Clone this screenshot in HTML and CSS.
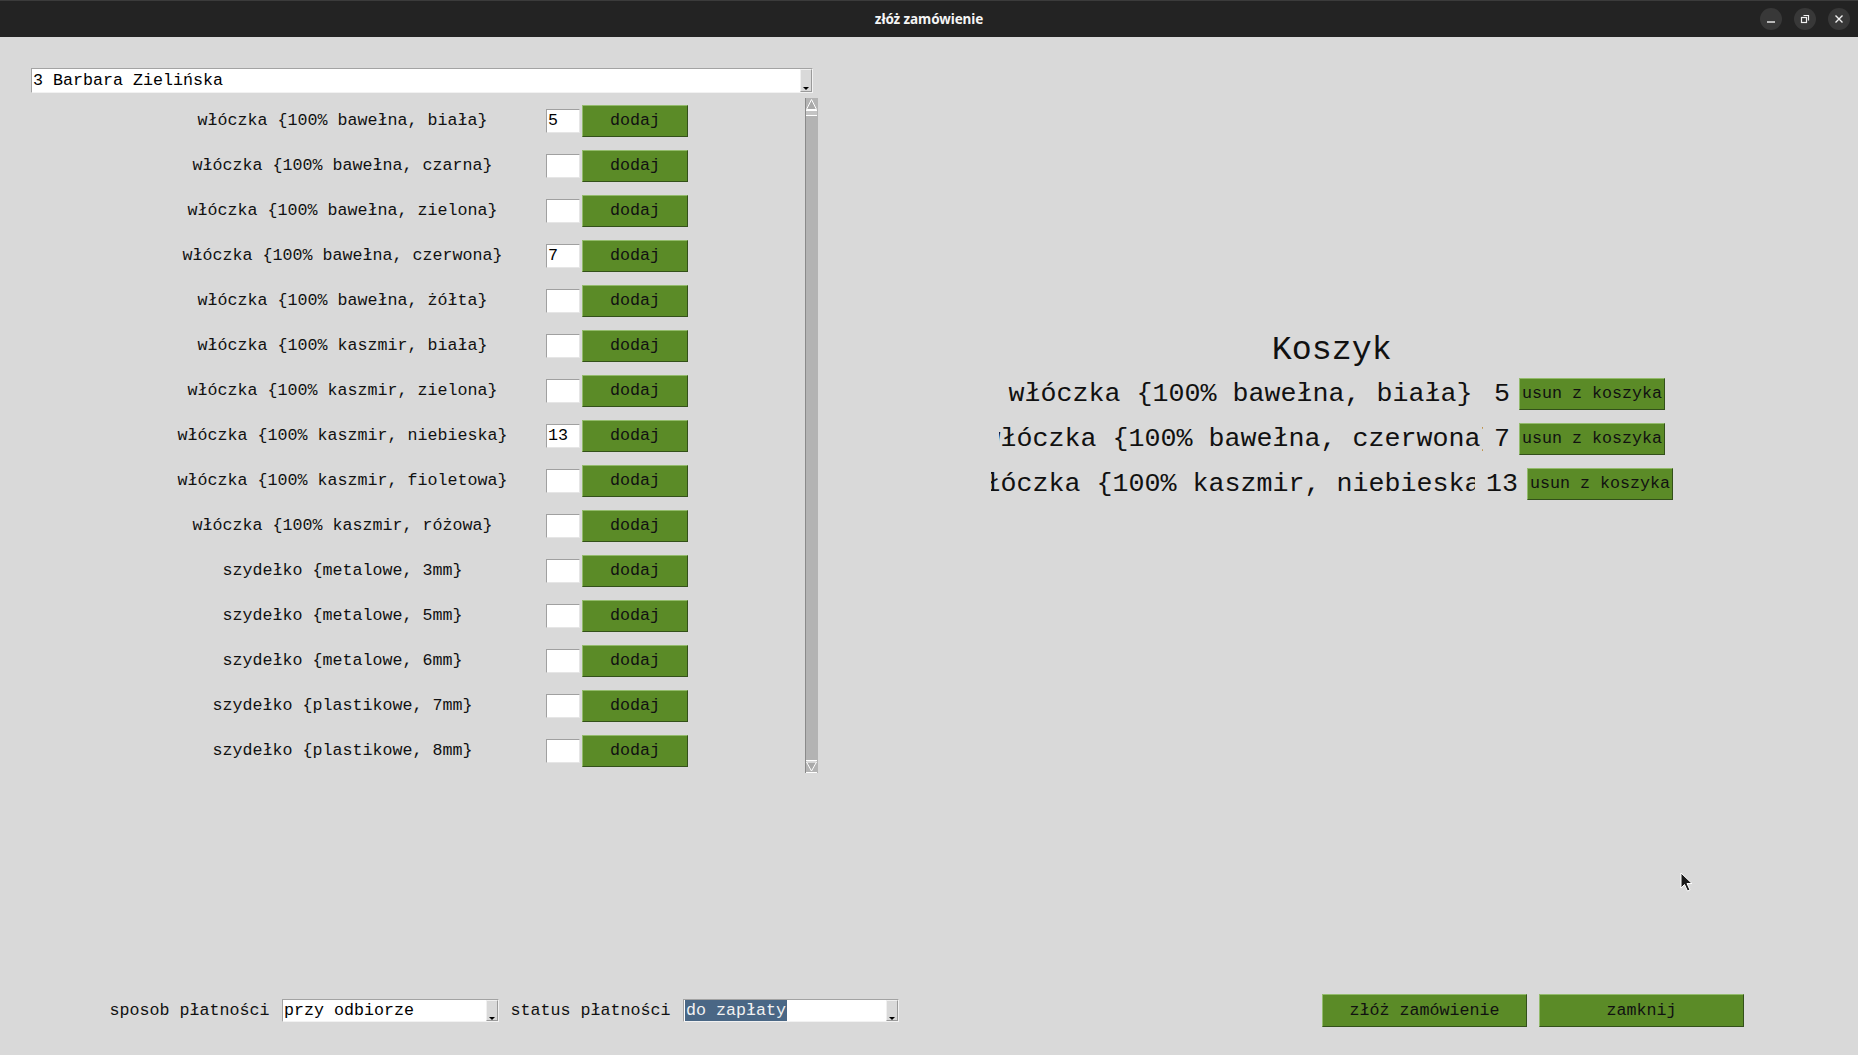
FILE: index.html
```html
<!DOCTYPE html>
<html lang="pl">
<head>
<meta charset="utf-8">
<title>złóż zamówienie</title>
<link rel="stylesheet" href="styles.css">
</head>
<body>
<div class="titlebar">
  <div></div>
  <div class="title">złóż zamówienie</div>
  <div class="controls">
    <span class="ctl"><svg width="22" height="22" viewBox="0 0 22 22"><line x1="7" y1="14" x2="15" y2="14" stroke="#f0f0f0" stroke-width="1.4"/></svg></span>
    <span class="ctl"><svg width="22" height="22" viewBox="0 0 22 22"><rect x="7.5" y="9.5" width="5" height="5" fill="none" stroke="#f0f0f0" stroke-width="1.2"/><path d="M9.5 7.5 H14.5 V12.5" fill="none" stroke="#f0f0f0" stroke-width="1.2"/></svg></span>
    <span class="ctl"><svg width="22" height="22" viewBox="0 0 22 22"><path d="M7.5 7.5 L14.5 14.5 M14.5 7.5 L7.5 14.5" stroke="#f0f0f0" stroke-width="1.4"/></svg></span>
  </div>
</div>

<div class="window">
  <div class="top">
    <div class="left">
      <div class="combo combo-main">
        <span class="combo-text">3 Barbara Zielińska</span>
        <span class="combo-arrow"><svg width="10" height="21" viewBox="0 0 10 21"><polygon points="2,17 8,17 5,20" fill="#000"/></svg></span>
      </div>
      <div class="list">
        <div class="rows">
          <div class="row"><span class="name">włóczka {100% bawełna, biała}</span><span class="qty">5</span><span class="btn add">dodaj</span></div>
          <div class="row"><span class="name">włóczka {100% bawełna, czarna}</span><span class="qty"></span><span class="btn add">dodaj</span></div>
          <div class="row"><span class="name">włóczka {100% bawełna, zielona}</span><span class="qty"></span><span class="btn add">dodaj</span></div>
          <div class="row"><span class="name">włóczka {100% bawełna, czerwona}</span><span class="qty">7</span><span class="btn add">dodaj</span></div>
          <div class="row"><span class="name">włóczka {100% bawełna, żółta}</span><span class="qty"></span><span class="btn add">dodaj</span></div>
          <div class="row"><span class="name">włóczka {100% kaszmir, biała}</span><span class="qty"></span><span class="btn add">dodaj</span></div>
          <div class="row"><span class="name">włóczka {100% kaszmir, zielona}</span><span class="qty"></span><span class="btn add">dodaj</span></div>
          <div class="row"><span class="name">włóczka {100% kaszmir, niebieska}</span><span class="qty">13</span><span class="btn add">dodaj</span></div>
          <div class="row"><span class="name">włóczka {100% kaszmir, fioletowa}</span><span class="qty"></span><span class="btn add">dodaj</span></div>
          <div class="row"><span class="name">włóczka {100% kaszmir, różowa}</span><span class="qty"></span><span class="btn add">dodaj</span></div>
          <div class="row"><span class="name">szydełko {metalowe, 3mm}</span><span class="qty"></span><span class="btn add">dodaj</span></div>
          <div class="row"><span class="name">szydełko {metalowe, 5mm}</span><span class="qty"></span><span class="btn add">dodaj</span></div>
          <div class="row"><span class="name">szydełko {metalowe, 6mm}</span><span class="qty"></span><span class="btn add">dodaj</span></div>
          <div class="row"><span class="name">szydełko {plastikowe, 7mm}</span><span class="qty"></span><span class="btn add">dodaj</span></div>
          <div class="row"><span class="name">szydełko {plastikowe, 8mm}</span><span class="qty"></span><span class="btn add">dodaj</span></div>
        </div>
        <div class="scrollbar">
          <svg class="sb-top" width="13" height="18" viewBox="0 0 13 18">
            <polygon points="6.5,1.5 1.5,11.5 11.5,11.5" fill="#a9a9a9" stroke="#ffffff" stroke-width="1"/>
            <line x1="1" y1="12.5" x2="12" y2="12.5" stroke="#ffffff"/>
            <rect x="1" y="13" width="11" height="4" fill="#c4c4c4"/>
            <line x1="1" y1="17.5" x2="12" y2="17.5" stroke="#ffffff"/>
          </svg>
          <svg class="sb-bottom" width="13" height="13" viewBox="0 0 13 13">
            <line x1="1" y1="0.5" x2="12" y2="0.5" stroke="#ffffff"/>
            <polygon points="1.5,2 11.5,2 6.5,11" fill="#a9a9a9" stroke="#ffffff" stroke-width="1"/>
            <line x1="1" y1="12.5" x2="12" y2="12.5" stroke="#ffffff"/>
          </svg>
        </div>
      </div>
    </div>

    <div class="right">
      <div class="heading">Koszyk</div>
      <div class="cart-row"><span class="cname"><span>włóczka {100% bawełna, biała}</span></span><span class="cqty">5</span><span class="btn remove">usun z koszyka</span></div>
      <div class="cart-row"><span class="cname"><span>włóczka {100% bawełna, czerwona}</span></span><span class="cqty">7</span><span class="btn remove">usun z koszyka</span></div>
      <div class="cart-row"><span class="cname"><span>włóczka {100% kaszmir, niebieska}</span></span><span class="cqty">13</span><span class="btn remove">usun z koszyka</span></div>
    </div>
  </div>

  <div class="bottom">
    <span class="blabel">sposob płatności</span>
    <div class="combo combo-small">
      <span class="combo-text">przy odbiorze</span>
      <span class="combo-arrow"><svg width="10" height="21" viewBox="0 0 10 21"><polygon points="2,16 8,16 5,19" fill="#000"/></svg></span>
    </div>
    <span class="blabel blabel2">status płatności</span>
    <div class="combo combo-small combo-status">
      <span class="combo-text"><span class="sel">do zapłaty</span></span>
      <span class="combo-arrow"><svg width="10" height="21" viewBox="0 0 10 21"><polygon points="2,16 8,16 5,19" fill="#000"/></svg></span>
    </div>
    <span class="btn big first">złóż zamówienie</span>
    <span class="btn big">zamknij</span>
  </div>
</div>

<svg class="cursor" width="14" height="22" viewBox="0 0 14 22">
  <path d="M1 1 L1 16 L4.5 12.5 L7.5 19 L10 18 L7 11.5 L12 11.5 Z" fill="#1a1a1a" stroke="#ffffff" stroke-width="1"/>
</svg>
</body>
</html>
```

FILE: styles.css
```css
* {
  box-sizing: border-box;
}

html, body {
  margin: 0;
  padding: 0;
}

body {
  width: 1858px;
  height: 1055px;
  overflow: hidden;
  position: relative;
  background: #d9d9d9;
  font-family: "Liberation Mono", "DejaVu Sans Mono", monospace;
  font-size: 16.67px;
  color: #111;
}

/* ---------- title bar ---------- */
.titlebar {
  height: 37px;
  background: #232323;
  border-top: 1px solid #3b3b3b;
  display: grid;
  grid-template-columns: 1fr auto 1fr;
  align-items: center;
}

.title {
  color: #f4f4f4;
  font-family: "Noto Sans", "DejaVu Sans", sans-serif;
  font-weight: 700;
  font-size: 13.5px;
  letter-spacing: -0.1px;
}

.controls {
  display: flex;
  justify-content: flex-end;
  gap: 12px;
  padding-right: 8px;
}

.ctl {
  width: 22px;
  height: 22px;
  border-radius: 50%;
  background: #383838;
  display: block;
}

.ctl svg {
  display: block;
}

/* ---------- window ---------- */
.window {
  height: 1018px;
  padding-top: 31px;
  display: flex;
  flex-direction: column;
}

.top {
  flex: 1;
  display: flex;
}

.left {
  width: 787px;
  margin-left: 31px;
}

/* combobox */
.combo {
  display: flex;
  background: #ffffff;
  border: 1px solid;
  border-color: #a3a3a3 #f2f2f2 #f2f2f2 #a3a3a3;
}

.combo-main {
  width: 782px;
  height: 25px;
}

.combo-text {
  flex: 1;
  display: flex;
  align-items: center;
  padding-left: 1px;
  white-space: nowrap;
  color: #000;
}

.combo-arrow {
  width: 12px;
  background: #d9d9d9;
  border: 1px solid;
  border-color: #f0f0f0 #9a9a9a #9a9a9a #f0f0f0;
  display: flex;
  justify-content: center;
}

.combo-arrow svg {
  display: block;
}

/* list */
.list {
  margin-top: 5px;
  display: flex;
}

.rows {
  width: 774px;
  padding-left: 108px;
}

.row {
  height: 45px;
  display: flex;
  align-items: center;
}

.name {
  width: 407px;
  text-align: center;
  white-space: nowrap;
  color: #111;
}

.qty {
  width: 34px;
  height: 24px;
  margin-right: 2px;
  background: #ffffff;
  border: 1px solid;
  border-color: #a0a0a0 #e6e6e6 #e6e6e6 #a0a0a0;
  padding-left: 1px;
  line-height: 21px;
  color: #000;
}

.btn {
  display: flex;
  align-items: center;
  justify-content: center;
  background: #5b8b27;
  border: 1px solid;
  border-color: #93bb6c #33501a #33501a #93bb6c;
  color: #111;
  white-space: nowrap;
}

.add {
  width: 106px;
  height: 32px;
}

/* scrollbar */
.scrollbar {
  width: 13px;
  height: 675px;
  background: #b3b3b3;
  border-left: 1px solid #8a8a8a;
  display: flex;
  flex-direction: column;
  justify-content: space-between;
}

.scrollbar svg {
  display: block;
  margin-left: -1px;
}

/* ---------- cart ---------- */
.right {
  flex: 1;
  margin-right: 12.5px;
  display: flex;
  flex-direction: column;
  align-items: center;
}

.heading {
  margin-top: 263px;
  margin-bottom: 2px;
  font-size: 33.33px;
  line-height: 38px;
  color: #111;
}

.cart-row {
  height: 45px;
  display: flex;
  align-items: center;
}

.cname {
  width: 484px;
  overflow: hidden;
  display: flex;
  justify-content: center;
  white-space: nowrap;
  font-size: 26.67px;
  color: #111;
}

.cname span {
  flex-shrink: 0;
}

.cqty {
  padding: 0 9px 0 11.5px;
  font-size: 26.67px;
  color: #111;
}

.remove {
  width: 146px;
  height: 32px;
}

/* ---------- bottom bar ---------- */
.bottom {
  height: 33px;
  margin-bottom: 28px;
  padding-left: 109.5px;
  padding-right: 114px;
  display: flex;
  align-items: center;
}

.blabel {
  width: 160px;
  white-space: nowrap;
  margin-right: 12.5px;
  color: #111;
}

.blabel2 {
  margin-left: 11.5px;
}

.combo-small {
  width: 217px;
  height: 23px;
}

.combo-status {
  width: 216px;
}

.sel {
  background: #4a6785;
  color: #f2f2f2;
  padding: 1px 1px 0 1px;
  line-height: 20px;
}

.big {
  width: 205px;
  height: 33px;
}

.big.first {
  margin-left: auto;
  margin-right: 12px;
}

/* cursor overlay */
.cursor {
  position: absolute;
  left: 1680px;
  top: 872px;
}
```
